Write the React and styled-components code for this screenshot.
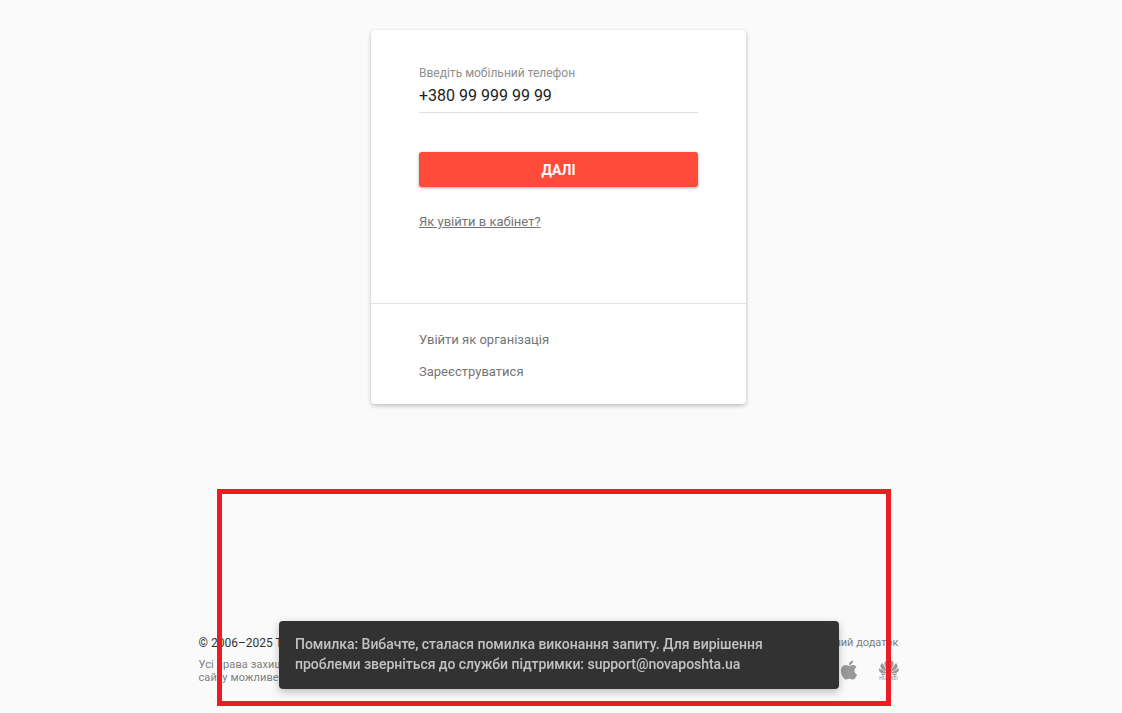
import React from 'react';
import styled, { createGlobalStyle } from 'styled-components';
import { FaApple } from 'react-icons/fa';
import { SiHuawei } from 'react-icons/si';

const Global = createGlobalStyle`
  html, body { margin: 0; padding: 0; background: #fafafa; }
  body { font-family: Roboto, "Liberation Sans", sans-serif; overflow: hidden; }
`;
const Page = styled.div`
  position: relative;
  box-sizing: border-box;
  height: 713px;
  padding: 30px 5px 0 0;
  display: flex;
  flex-direction: column;
  align-items: center;
`;
const Card = styled.section`
  width: 375px;
  height: 374px;
  box-sizing: border-box;
  background: #fff;
  border-radius: 4px;
  box-shadow: 0 2px 4px rgba(0,0,0,.22), 0 0 3px rgba(0,0,0,.06);
  display: flex;
  flex-direction: column;
`;
const Main = styled.div`
  height: 274px;
  box-sizing: border-box;
  padding: 36px 48px 0;
  border-bottom: 1px solid #e4e4e4;
`;
const Label = styled.div`
  font-size: 12px;
  line-height: 14px;
  color: #8f8f8f;
`;
const Value = styled.div`
  font-size: 16px;
  line-height: 19px;
  color: #212121;
  margin-top: 6px;
  padding-bottom: 7px;
  border-bottom: 1px solid #dedede;
`;
const Submit = styled.button`
  display: block;
  width: 100%;
  height: 35px;
  margin-top: 39px;
  border: 0;
  border-radius: 3px;
  background: #ff4b3a;
  color: #fff;
  font: 700 14px Roboto, sans-serif;
  box-shadow: 0 1px 3px rgba(0,0,0,.35);
`;
const HelpLink = styled.a`
  display: block;
  margin-top: 27px;
  font-size: 13px;
  line-height: 15px;
  color: #757575;
  text-decoration: underline;
`;
const Extra = styled.div`
  padding: 28px 48px 0;
  display: flex;
  flex-direction: column;
  gap: 17px;
`;
const ExtraLink = styled.a`
  font-size: 13px;
  line-height: 15px;
  color: #757575;
`;
const Footer = styled.footer`
  margin-top: auto;
  margin-bottom: 29px;
  width: 720px;
  box-sizing: border-box;
  padding-right: 20px;
  display: flex;
  justify-content: space-between;
`;
const Legal = styled.div`
  width: 250px;
`;
const Copy = styled.div`
  font-size: 12px;
  line-height: 14px;
  color: #333;
`;
const Rights = styled.div`
  margin-top: 8px;
  font-size: 11px;
  line-height: 13px;
  letter-spacing: .1px;
  color: #808080;
`;
const Apps = styled.div`
  display: flex;
  flex-direction: column;
  align-items: flex-end;
`;
const AppsTitle = styled.div`
  font-size: 11px;
  line-height: 14px;
  color: #808080;
`;
const Stores = styled.div`
  margin-top: 8px;
  display: flex;
  align-items: center;
  gap: 19px;
  color: #999;
`;
const Huawei = styled.div`
  display: flex;
  flex-direction: column;
  align-items: center;
  width: 20px;
  color: #999;
`;
const HuaweiText = styled.span`
  font-size: 5px;
  line-height: 5px;
  margin-top: -2px;
  color: #8a8a8a;
`;
const Toast = styled.div`
  position: fixed;
  left: 279px;
  bottom: 24px;
  width: 560px;
  height: 68px;
  box-sizing: border-box;
  padding: 13px 16px;
  background: #323232;
  border-radius: 4px;
  color: rgba(255,255,255,.7);
  font-size: 14px;
  font-weight: 500;
  line-height: 20px;
  letter-spacing: -.03px;
  box-shadow: 0 3px 8px rgba(0,0,0,.25);
`;
const Highlight = styled.div`
  position: absolute;
  left: 217px;
  top: 489px;
  width: 674px;
  height: 217px;
  box-sizing: border-box;
  border: 5px solid #ed1c24;
  pointer-events: none;
  z-index: 5;
`;

export default function App() {
  return (
    <Page>
      <Global />
      <Card>
        <Main>
          <Label>Введіть мобільний телефон</Label>
          <Value>+380 99 999 99 99</Value>
          <Submit>ДАЛІ</Submit>
          <HelpLink>Як увійти в кабінет?</HelpLink>
        </Main>
        <Extra>
          <ExtraLink>Увійти як організація</ExtraLink>
          <ExtraLink>Зареєструватися</ExtraLink>
        </Extra>
      </Card>
      <Footer>
        <Legal>
          <Copy>© 2006–2025 ТОВ «Нова пошта»</Copy>
          <Rights>Усі права захищені. Використання матеріалів сайту можливе лише за згодою</Rights>
        </Legal>
        <Apps>
          <AppsTitle>Мобільний додаток</AppsTitle>
          <Stores>
            <FaApple size={22} />
            <Huawei>
              <SiHuawei size={20} />
              <HuaweiText>HUAWEI</HuaweiText>
            </Huawei>
          </Stores>
        </Apps>
      </Footer>
      <Toast>
        Помилка: Вибачте, сталася помилка виконання запиту. Для вирішення проблеми зверніться до служби підтримки: support@novaposhta.ua
      </Toast>
      <Highlight />
    </Page>
  );
}
